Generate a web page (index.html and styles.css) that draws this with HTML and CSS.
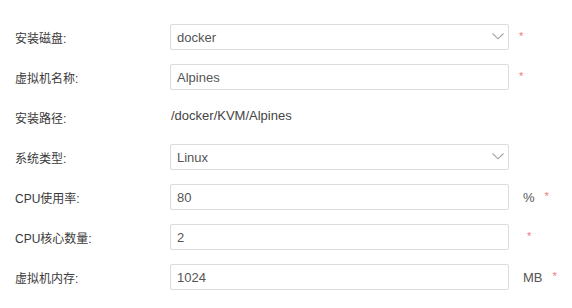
FILE: index.html
```html
<!DOCTYPE html>
<html lang="zh-CN">
<head>
<meta charset="utf-8">
<title>虚拟机</title>
<link rel="stylesheet" href="styles.css">
</head>
<body>
<form class="form">
  <div class="row">
    <label class="label">安装磁盘:</label>
    <div class="field select"><span class="value">docker</span>
      <svg class="chev" width="12" height="7" viewBox="0 0 12 7"><path d="M0.5 0.5 L6 5.8 L11.5 0.5" fill="none" stroke="#a0a0a0" stroke-width="1.1"/></svg>
    </div>
    <span class="req">*</span>
  </div>
  <div class="row">
    <label class="label">虚拟机名称:</label>
    <div class="field"><span class="value">Alpines</span></div>
    <span class="req">*</span>
  </div>
  <div class="row">
    <label class="label">安装路径:</label>
    <div class="path">/docker/KVM/Alpines</div>
  </div>
  <div class="row">
    <label class="label">系统类型:</label>
    <div class="field select"><span class="value">Linux</span>
      <svg class="chev" width="12" height="7" viewBox="0 0 12 7"><path d="M0.5 0.5 L6 5.8 L11.5 0.5" fill="none" stroke="#a0a0a0" stroke-width="1.1"/></svg>
    </div>
  </div>
  <div class="row">
    <label class="label">CPU使用率:</label>
    <div class="field"><span class="value">80</span></div>
    <span class="unit">%</span><span class="req">*</span>
  </div>
  <div class="row">
    <label class="label">CPU核心数量:</label>
    <div class="field"><span class="value">2</span></div>
    <span class="req req-wide">*</span>
  </div>
  <div class="row">
    <label class="label">虚拟机内存:</label>
    <div class="field"><span class="value">1024</span></div>
    <span class="unit">MB</span><span class="req">*</span>
  </div>
</form>
</body>
</html>
```

FILE: styles.css
```css
html, body {
  margin: 0;
  padding: 0;
  background: #ffffff;
}
body {
  font-family: "Liberation Sans", "Noto Sans CJK SC", sans-serif;
  color: #3a3a3a;
}
.form {
  padding: 24px 0 0 15px;
}
.row {
  display: flex;
  align-items: center;
  height: 26px;
  margin-bottom: 14px;
}
.label {
  width: 155px;
  flex: none;
  font-size: 12px;
  color: #3a3a3a;
}
.field {
  box-sizing: border-box;
  width: 339px;
  height: 26px;
  border: 1px solid #dcdcdc;
  border-radius: 2px;
  display: flex;
  align-items: center;
  padding: 0 4px 0 6px;
  font-size: 13px;
  color: #555555;
}
.value {
  flex: 1;
}
.chev {
  display: block;
  margin-top: -1px;
}
.path {
  font-size: 13px;
  color: #444444;
  margin-top: -4px;
  margin-left: 1px;
}
.unit {
  margin-left: 14px;
  font-size: 13px;
  color: #555555;
}
.req {
  margin-left: 10px;
  font-size: 11px;
  color: #f0767e;
  margin-top: -2px;
}
.unit + .req {
  margin-left: 10px;
}
.req-wide {
  margin-left: 18px;
}
```
